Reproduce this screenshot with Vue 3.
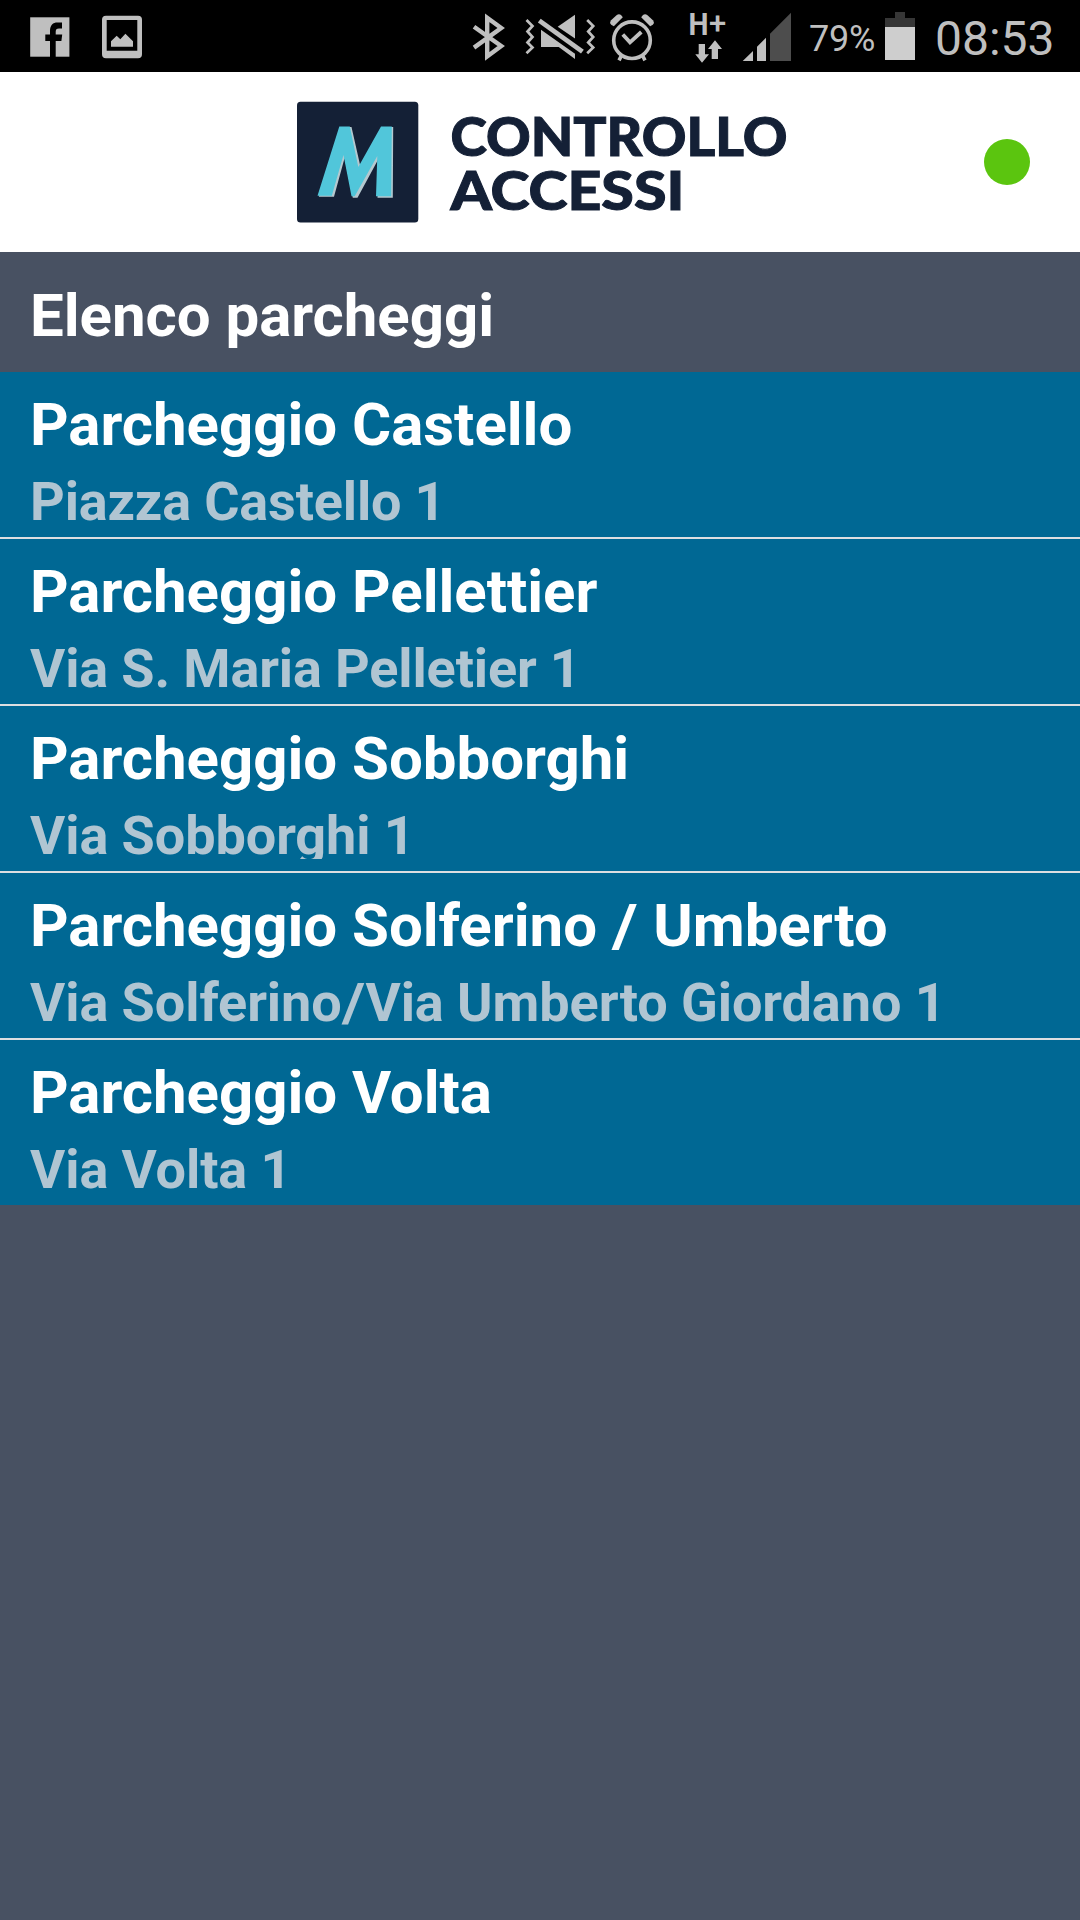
<script setup>
const parkings = [
  { name: ['Parcheggio Castello'], address: ['Piazza Castello 1'] },
  { name: ['Parcheggio Pellettier'], address: ['Via S. Maria Pelletier 1'] },
  { name: ['Parcheggio Sobborghi'], address: ['Via Sobborghi 1'] },
  { name: ['Parcheggio Solferino ', ' Umberto'], address: ['Via Solferino', 'Via Umberto Giordano 1'] },
  { name: ['Parcheggio Volta'], address: ['Via Volta 1'] },
]
</script>

<template>
  <div class="screen">
    <div class="status">
      <svg class="notifications" width="112" height="72" viewBox="30 0 112 72">
        <rect x="30.2" y="17.3" width="39.2" height="39.4" fill="#bfbfbf" />
        <path d="M50 57V41H45.3V34.5H50V31C50 25 53 22.5 57.5 22.5H62V28.5H59C56.5 28.5 55.7 29.5 55.7 32V34.5H62.2L61.4 41H55.7V57Z" fill="#000" />
        <path fill-rule="evenodd" d="M106 15.7H138A4 4 0 0 1 142 19.7V54.3A4 4 0 0 1 138 58.3H106A4 4 0 0 1 102 54.3V19.7A4 4 0 0 1 106 15.7ZM106.7 20V50.7H137.3V20Z" fill="#bfbfbf" />
        <path d="M111 46.7V41.3L116.7 35.7L120.3 39.3L125.4 33.7L133 41.3V46.7Z" fill="#bfbfbf" />
      </svg>

      <svg class="indicators" width="322" height="72" viewBox="472 0 322 72" fill="#bfbfbf">
        <g fill="none" stroke="#bfbfbf">
          <path d="M474 26.8L501.2 46L487.2 56.4V17.8L501.2 28L474 47.6" stroke-width="4.4" />
          <path d="M526.5 20L532.5 26L527.5 31.5L532.5 37L527.5 42.5L532.5 47.5L526.5 53.2M587.2 20L593.2 26L588.2 31.5L593.2 37L588.2 42.5L593.2 47.5L587.2 53.2" stroke-width="2.7" />
          <path d="M539.3 20.6L582.4 51.6" stroke-width="4.8" />
          <circle cx="632" cy="40.2" r="18.3" stroke-width="3.6" />
          <path d="M622.8 34.5L630 42.3L641.3 32" stroke-width="3.8" />
          <path d="M622 54.5L619 60.4M642 54.5L645 60.4" stroke-width="3.6" />
        </g>
        <path d="M575 14.7V38.5L557.7 26.7Z" />
        <path d="M541 29.7L575 53.7V59L558.7 47H541Z" />
        <path d="M622.8 17.3L613.8 26.3L611.2 24.8Q609.2 22.5 610.8 20.4L616.8 15Q619 13.7 621 15Z" />
        <path d="M641.2 17.3L650.2 26.3L652.8 24.8Q654.8 22.5 653.2 20.4L647.2 15Q645 13.7 643 15Z" />
        <text class="net" x="688.6" y="34.8" font-weight="700" textLength="20" lengthAdjust="spacingAndGlyphs">H</text>
        <text class="net plus" x="709" y="34.4" font-weight="500">+</text>
        <path d="M698.7 44H705V54.3H709L702 62.7L695.3 54.3H698.7Z" />
        <path d="M711.7 59V49H708L715 40.3L722 49H718V59Z" />
        <path d="M742.7 61L753 51V61ZM757 61V46.7L766 37.7V61Z" />
        <path d="M770 61V33.7L791 12.7V61Z" fill="#4d4d4d" />
      </svg>

      <span class="percent">79%</span>
      <svg class="battery" width="30" height="72" viewBox="885 0 30 72">
        <path d="M895 12H905V18H915V27H885V18H895Z" fill="#363636" />
        <rect x="885" y="27" width="30" height="33" fill="#cecece" />
      </svg>
      <span class="clock">08:53</span>
    </div>

    <header class="header">
      <svg class="logo" width="500" height="180" viewBox="297 72 500 180">
        <rect x="297" y="101.7" width="121.3" height="120.8" rx="3.5" fill="#142036" />
        <path d="M318.8 196.8L340.8 126.9H351.5L360.2 165.5L382.5 126.9H393.2L392.8 197.8H377.5L379 158L357.5 197.8H352.8L344.6 158L334 196.8Z" fill="#b5c8cf" />
        <path d="M317.5 195.8L339.3 126.4H349.8L358.3 167L381 126.4H391.8L391.2 196.3H376L377.3 156L354.7 196.3H351.5L343.5 155L331.8 195.8Z" fill="#51c6da" />
        <text class="brand" x="450.5" y="155.8" textLength="337" lengthAdjust="spacingAndGlyphs">CONTROLLO</text>
        <text class="brand" x="450.4" y="209.8" textLength="234" lengthAdjust="spacingAndGlyphs">ACCESSI</text>
      </svg>
      <span class="online"></span>
    </header>

    <h1 class="title">Elenco parcheggi</h1>
    <ul class="list">
      <li v-for="(p, i) in parkings" :key="i" class="item">
        <div class="name"><template v-for="(part, k) in p.name" :key="k"><span v-if="k" class="slash">/</span>{{ part }}</template></div>
        <div class="address"><template v-for="(part, k) in p.address" :key="k"><span v-if="k" class="slash">/</span>{{ part }}</template></div>
      </li>
    </ul>
  </div>
</template>

<style>
body {
  margin: 0;
  background: #485162;
}
</style>

<style scoped>
.screen {
  width: 1080px;
  height: 1920px;
  overflow: hidden;
  background: #485162;
  font-family: Roboto, "Noto Sans", sans-serif;
}
.status {
  display: flex;
  height: 72px;
  background: #000;
  color: #bfbfbf;
  white-space: nowrap;
}
svg {
  display: block;
  flex: none;
}
.notifications {
  margin-left: 30px;
}
.indicators {
  margin-left: 330px;
}
.net {
  font-family: Roboto, sans-serif;
  font-size: 32px;
}
.plus {
  font-size: 31px;
}
.percent {
  width: 76px;
  margin-left: 15px;
  font-size: 36px;
  font-weight: 400;
  line-height: 78px;
  letter-spacing: -0.2px;
}
.clock {
  margin-left: 20px;
  font-size: 48px;
  font-weight: 400;
  line-height: 77px;
}
.header {
  display: flex;
  align-items: center;
  justify-content: space-between;
  height: 180px;
  padding: 0 50px 0 297px;
  background: #fff;
}
.brand {
  font-family: Lato, "Open Sans", sans-serif;
  font-size: 53px;
  font-weight: 900;
  fill: #142036;
  stroke: #142036;
  stroke-width: 1;
}
.online {
  width: 46px;
  height: 46px;
  margin-bottom: 1px;
  border-radius: 50%;
  background: #5bc50f;
}
.title {
  height: 120px;
  margin: 0;
  padding: 4px 30px 0;
  box-sizing: border-box;
  color: #fff;
  font-size: 60px;
  font-weight: 700;
  line-height: 120px;
  letter-spacing: -0.04px;
}
.list {
  margin: 0;
  padding: 0;
  list-style: none;
}
.item {
  height: 165px;
  padding: 15px 30px 0;
  box-sizing: border-box;
  background: #006894;
  font-weight: 700;
  white-space: nowrap;
}
.item + .item {
  border-top: 2px solid #dcdfe2;
  height: 167px;
}
.name {
  color: #fff;
  font-size: 60px;
  line-height: 75px;
  letter-spacing: -0.03px;
}
.address {
  height: 47px;
  margin-top: 16px;
  overflow: hidden;
  color: #b0c5d2;
  font-size: 54px;
  line-height: 47px;
  letter-spacing: -0.08px;
}
.item:nth-child(1) .address {
  letter-spacing: -0.16px;
}
.item:nth-child(2) .address {
  letter-spacing: -0.14px;
}
.item:nth-child(4) .address {
  letter-spacing: -0.07px;
}
.slash {
  display: inline-block;
  margin-right: 0.07em;
  transform: scaleX(1.15);
  transform-origin: left;
}
</style>
